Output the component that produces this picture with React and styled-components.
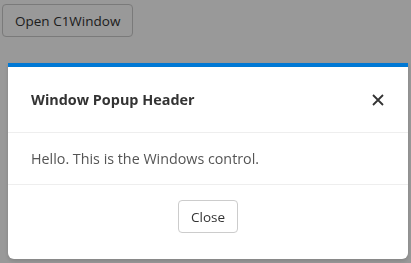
import React from "react";
import styled, { createGlobalStyle } from "styled-components";

const Global = createGlobalStyle`
  html, body { margin: 0; padding: 0; background: #fff; }
  body { font-family: "Open Sans", "Noto Sans", sans-serif; color: #333; }
  * { box-sizing: border-box; }
`;

const Page = styled.div`
  padding: 4px 2px;
  height: 263px;
`;

const Button = styled.button`
  font-family: inherit;
  font-size: 13.5px;
  color: #333;
  background: #fff;
  border: 1px solid #ccc;
  border-radius: 4px;
  height: ${(p) => p.$h}px;
  padding: 0 ${(p) => p.$px}px;
  cursor: pointer;
`;

const Overlay = styled.div`
  position: fixed;
  inset: 0;
  background: rgba(0, 0, 0, 0.4);
`;

const Dialog = styled.div`
  position: fixed;
  left: 8px;
  top: 63px;
  width: 400px;
  background: #fff;
  border-top: 4px solid #0078d4;
  border-radius: 0 0 6px 6px;
  box-shadow: 0 2px 4px rgba(0, 0, 0, 0.15);
  display: flex;
  flex-direction: column;
`;

const Header = styled.div`
  height: 66px;
  padding: 0 24px 0 23px;
  display: flex;
  align-items: center;
  justify-content: space-between;
  border-bottom: 1px solid #eee;
`;

const Title = styled.div`
  font-size: 14.4px;
  font-weight: 700;
  color: #333;
`;

const CloseIcon = styled.button`
  border: 0;
  background: none;
  padding: 0;
  width: 12px;
  height: 12px;
  display: flex;
  cursor: pointer;
`;

const Body = styled.div`
  height: 52px;
  padding: 0 23px;
  display: flex;
  align-items: center;
  font-size: 14.3px;
  color: #555;
  border-bottom: 1px solid #eee;
`;

const Footer = styled.div`
  padding: 15px 0 26px;
  display: flex;
  justify-content: center;
`;

export default function App() {
  return (
    <>
      <Global />
      <Page>
        <Button $h={33} $px={12}>Open C1Window</Button>
      </Page>
      <Overlay />
      <Dialog>
        <Header>
          <Title>Window Popup Header</Title>
          <CloseIcon aria-label="close">
            <svg width="12" height="12" viewBox="0 0 12 12">
              <path d="M1 1L11 11M11 1L1 11" stroke="#333" strokeWidth="1.8" />
            </svg>
          </CloseIcon>
        </Header>
        <Body>Hello. This is the Windows control.</Body>
        <Footer>
          <Button $h={33} $px={12}>Close</Button>
        </Footer>
      </Dialog>
    </>
  );
}
